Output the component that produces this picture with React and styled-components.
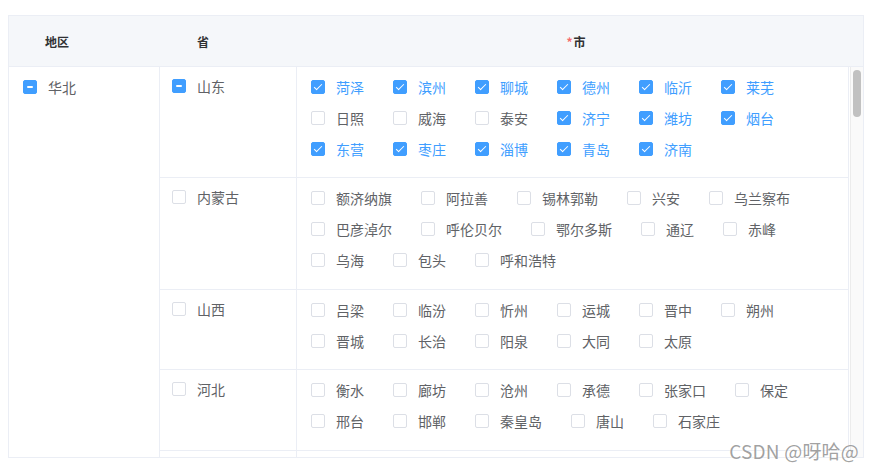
import React from "react";
import styled, { createGlobalStyle } from "styled-components";

const Global = createGlobalStyle`
  html, body { margin: 0; padding: 0; background: #fff; }
  body { font-family: "Noto Sans CJK SC", "Noto Sans", sans-serif; }
  * { box-sizing: border-box; }
`;

const Page = styled.div`
  position: relative;
  width: 873px;
  height: 469px;
  padding: 15px 0 0 8px;
  overflow: hidden;
`;

const Table = styled.div`
  width: 856px;
  height: 443px;
  border: 1px solid #ebeef5;
  display: flex;
  flex-direction: column;
  overflow: hidden;
`;

const HeaderRow = styled.div`
  display: grid;
  grid-template-columns: 151px 137px 1fr;
  height: 51px;
  flex-shrink: 0;
  background: #f5f7fa;
  border-bottom: 1px solid #ebeef5;
  font-size: 12px;
  font-weight: 700;
  color: #303133;
`;

const HeadCell = styled.div`
  display: flex;
  align-items: center;
  justify-content: ${(p) => (p.$center ? "center" : "flex-start")};
  padding-left: ${(p) => p.$pl || 0}px;
  padding-right: ${(p) => p.$pr || 0}px;
`;

const Required = styled.span`
  color: #f56c6c;
  margin-right: 1px;
`;

const Body = styled.div`
  flex: 1;
  min-height: 0;
  display: flex;
`;

const RegionCell = styled.div`
  width: 151px;
  flex-shrink: 0;
  border-right: 1px solid #ebeef5;
  padding: 4px 0 0 14px;
`;

const Provinces = styled.div`
  flex: 1;
  min-width: 0;
  overflow: hidden;
  display: flex;
  flex-direction: column;
`;

const ProvinceRow = styled.div`
  display: grid;
  grid-template-columns: 137px 1fr;
  border-bottom: ${(p) => (p.$filler ? "0" : "1px solid #ebeef5")};
  flex: ${(p) => (p.$filler ? "1" : "none")};
`;

const ProvinceCell = styled.div`
  border-right: 1px solid #ebeef5;
  padding: 3px 0 0 12px;
`;

const CityCell = styled.div`
  display: flex;
  flex-wrap: wrap;
  align-content: flex-start;
  padding: 4px 0 ${(p) => p.$pb}px 14px;
  border-right: 1px solid #ebeef5;
`;

const Gutter = styled.div`
  width: 14px;
  flex-shrink: 0;
  background: #fafafa;
  border-left: 1px solid #fff;
  box-shadow: inset 1px 0 0 #ececec;
  padding: 3px 0 0 3px;
`;

const Thumb = styled.div`
  width: 8px;
  height: 47px;
  border-radius: 4px;
  background: #c1c1c1;
`;

const Item = styled.label`
  display: inline-flex;
  align-items: center;
  height: 31px;
  margin-right: ${(p) => (p.$last ? 0 : 29)}px;
  font-size: 14px;
  color: ${(p) => (p.$checked ? "#409eff" : "#606266")};
  white-space: nowrap;
  cursor: pointer;
`;

const Box = styled.span`
  position: relative;
  width: 14px;
  height: 14px;
  flex-shrink: 0;
  margin-right: 11px;
  margin-top: 1px;
  border-radius: 2px;
  border: 1px solid ${(p) => (p.$state ? "#409eff" : "#dcdfe6")};
  background: ${(p) => (p.$state ? "#409eff" : "#fff")};

  &::after {
    content: "";
    position: absolute;
    display: ${(p) => (p.$state ? "block" : "none")};
    ${(p) =>
      p.$state === "half"
        ? `left: 3px; top: 5px; width: 6px; height: 2px; background: #fff; border-radius: 1px;`
        : `left: 4px; top: 1px; width: 3px; height: 7px; border: 1px solid #fff; border-left: 0; border-top: 0; transform: rotate(45deg);`}
  }
`;

const Watermark = styled.div`
  position: absolute;
  right: 14px;
  top: 437px;
  font-family: "Noto Sans CJK SC", "Noto Sans", sans-serif;
  font-size: 19px;
  color: rgba(120, 120, 120, 0.7);
  letter-spacing: 0.2px;
  text-shadow: 0 0 2px #fff;
  pointer-events: none;
`;

const Check = ({ label, state, last }) => (
  <Item $checked={state === true} $last={last}>
    <Box $state={state === true ? "on" : state} />
    {label}
  </Item>
);

const data = [
  {
    name: "山东",
    pb: 13,
    cities: [
      ["菏泽", 1], ["滨州", 1], ["聊城", 1], ["德州", 1], ["临沂", 1], ["莱芜", 1],
      ["日照", 0], ["威海", 0], ["泰安", 0], ["济宁", 1], ["潍坊", 1], ["烟台", 1],
      ["东营", 1], ["枣庄", 1], ["淄博", 1], ["青岛", 1], ["济南", 1],
    ],
  },
  {
    name: "内蒙古",
    pb: 14,
    cities: [
      "额济纳旗", "阿拉善", "锡林郭勒", "兴安", "乌兰察布", "巴彦淖尔", "呼伦贝尔",
      "鄂尔多斯", "通辽", "赤峰", "乌海", "包头", "呼和浩特",
    ].map((c) => [c, 0]),
  },
  {
    name: "山西",
    pb: 13,
    cities: [
      "吕梁", "临汾", "忻州", "运城", "晋中", "朔州", "晋城", "长治", "阳泉", "大同", "太原",
    ].map((c) => [c, 0]),
  },
  {
    name: "河北",
    pb: 14,
    cities: [
      "衡水", "廊坊", "沧州", "承德", "张家口", "保定", "邢台", "邯郸", "秦皇岛", "唐山", "石家庄",
    ].map((c) => [c, 0]),
  },
];

const provinceState = (cities) => {
  const n = cities.filter((c) => c[1]).length;
  if (n === 0) return false;
  if (n === cities.length) return true;
  return "half";
};

export default function App() {
  return (
    <>
      <Global />
      <Page>
        <Table>
          <HeaderRow>
            <HeadCell $pl={36}>地区</HeadCell>
            <HeadCell $pl={37}>省</HeadCell>
            <HeadCell $center $pr={8}>
              <Required>*</Required>市
            </HeadCell>
          </HeaderRow>
          <Body>
            <RegionCell>
              <Check label="华北" state="half" last />
            </RegionCell>
            <Provinces>
              {data.map((p) => (
                <ProvinceRow key={p.name}>
                  <ProvinceCell>
                    <Check label={p.name} state={provinceState(p.cities)} last />
                  </ProvinceCell>
                  <CityCell $pb={p.pb}>
                    {p.cities.map(([c, on]) => (
                      <Check key={c} label={c} state={on ? true : false} />
                    ))}
                  </CityCell>
                </ProvinceRow>
              ))}
              <ProvinceRow $filler>
                <ProvinceCell />
                <CityCell $pb={0} />
              </ProvinceRow>
            </Provinces>
            <Gutter>
              <Thumb />
            </Gutter>
          </Body>
        </Table>
        <Watermark>CSDN @呀哈@</Watermark>
      </Page>
    </>
  );
}
